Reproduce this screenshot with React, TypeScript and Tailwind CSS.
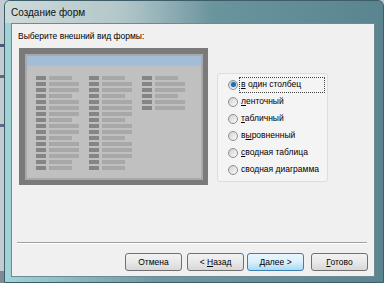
const COL_PATTERN = [0, 1, 1, 0, 1, 1, 1, 0, 1, 1, 0, 1, 1, 1, 0, 0];

const COLUMNS = [COL_PATTERN, COL_PATTERN, COL_PATTERN.slice(0, 6)];

const OPTIONS = [
  { pre: "", key: "в", post: " один столбец", checked: true },
  { pre: "", key: "л", post: "енточный", checked: false },
  { pre: "", key: "т", post: "абличный", checked: false },
  { pre: "в", key: "ы", post: "ровненный", checked: false },
  { pre: "", key: "с", post: "водная таблица", checked: false },
  { pre: "сводная ", key: "д", post: "иаграмма", checked: false },
];

function Radio({ checked }: { checked: boolean }) {
  return (
    <span className="w-[10px] h-[10px] shrink-0 rounded-full border border-[#8c8e90] bg-gradient-to-br from-[#cfd1d3] to-[#fbfbfb] flex items-center justify-center">
      {checked && <span className="w-[5px] h-[5px] rounded-full bg-[#1d6fb3] shadow-[0_0_2px_#6fb2e6]" />}
    </span>
  );
}

function Button({
  children,
  primary = false,
  className = "",
}: {
  children: React.ReactNode;
  primary?: boolean;
  className?: string;
}) {
  return (
    <button
      className={
        "w-[57px] h-[18px] rounded-[3px] border text-[8.5px] leading-none text-black flex items-center justify-center " +
        (primary
          ? "border-[#3c7fb1] bg-gradient-to-b from-[#eaf6fd] via-[#d9f0fc] to-[#a9daf6] "
          : "border-[#707070] bg-gradient-to-b from-[#f3f3f3] via-[#e8e8e8] to-[#d8d8d8] ") +
        className
      }
    >
      <span className="whitespace-pre">{children}</span>
    </button>
  );
}

export default function App() {
  return (
    <div
      className="w-[384px] h-[283px] flex overflow-hidden bg-[#bcc7cf]"
      style={{ fontFamily: '"Liberation Sans", Arial, sans-serif' }}
    >
      {/* desktop strip behind the window */}
      <div className="w-[4px] shrink-0 flex flex-col bg-[#c3ccd3]">
        <div className="h-[44px]" />
        <div className="h-[3px] bg-[#4a5a78]" />
        <div className="h-[28px]" />
        <div className="h-[3px] bg-[#6a6a6a]" />
        <div className="h-[46px]" />
        <div className="h-[3px] bg-[#5a6a88]" />
        <div className="flex-1" />
        <div className="h-[12px] bg-[#7d8a96]" />
      </div>

      {/* window */}
      <div className="flex-1 flex flex-col rounded-t-[6px] border border-[#3d5d68] bg-gradient-to-r from-[#a2d3d7] via-[#6f99a2] via-40% to-[#5a8490] pl-[6px] pr-[8px] pb-[5px]">
        <div className="h-[22px] -ml-[6px] -mr-[8px] pl-[6px] flex items-center rounded-t-[5px] bg-gradient-to-r from-[#cfdbdb] via-[#b3c7c9] via-30% to-transparent to-55%">
          <span className="text-[10px] text-[#111]">Создание форм</span>
        </div>

        <div className="flex-1 flex flex-col bg-[#f0f0f0] border border-[#6f8a93]">
          <div className="mt-[6px] pl-[6px] text-[8.5px] leading-[12px] text-black">
            Выберите внешний вид формы:
          </div>

          <div className="flex mt-[6px] pl-[7px]">
            {/* form preview */}
            <div className="w-[189px] h-[137px] bg-[#7a7a7a] pt-[6px] pl-[6px] pr-[5px] pb-[5px]">
              <div className="h-full border-2 border-[#a9a9a9] bg-[#c0c0c0] flex flex-col">
                <div className="h-[10px] bg-[#a3bcd8]" />
                <div className="flex pt-[10px] pl-[9px]">
                  {COLUMNS.map((rows, ci) => (
                    <div key={ci} className="w-[53px] flex flex-col gap-[2px]">
                      {rows.map((long, ri) => (
                        <div key={ri} className="flex gap-[3px]">
                          <div className="w-[10px] h-[4px] bg-[#858585]" />
                          <div className={(long ? "w-[30px]" : "w-[23px]") + " h-[4px] bg-[#a8a8a8]"} />
                        </div>
                      ))}
                    </div>
                  ))}
                </div>
              </div>
            </div>

            {/* layout options */}
            <div className="ml-[9px] mt-[25px] w-[111px] h-[109px] rounded-[3px] border border-[#d5dfe5] bg-[#f4f4f4] pt-[2px] pb-[3px] pl-[10px] flex flex-col">
              {OPTIONS.map((o, i) => (
                <div key={i} className="h-[17px] flex items-center">
                  <Radio checked={o.checked} />
                  <span
                    className={
                      "ml-[1px] h-[16px] flex items-center pl-[1px] text-[8.5px] text-black " +
                      (o.checked ? "w-[86px] border border-dotted border-[#444]" : "border border-transparent")
                    }
                  >
                    <span className="whitespace-pre">
                      {o.pre}
                      <span className="underline">{o.key}</span>
                      {o.post}
                    </span>
                  </span>
                </div>
              ))}
            </div>
          </div>

          <div className="flex-1" />
          <div className="ml-[5px] mr-[7px] h-[2px] border-t border-[#a0a0a0] border-b border-b-white" />
          <div className="flex justify-end mt-[9px] mb-[5px] pr-[6px]">
            <Button>Отмена</Button>
            <Button className="ml-[5px]">
              {"< "}
              <span className="underline">Н</span>азад
            </Button>
            <Button primary className="ml-[3px]">
              <span className="underline">Д</span>
              {"алее >"}
            </Button>
            <Button className="ml-[7px]">
              <span className="underline">Г</span>отово
            </Button>
          </div>
        </div>
      </div>
    </div>
  );
}
